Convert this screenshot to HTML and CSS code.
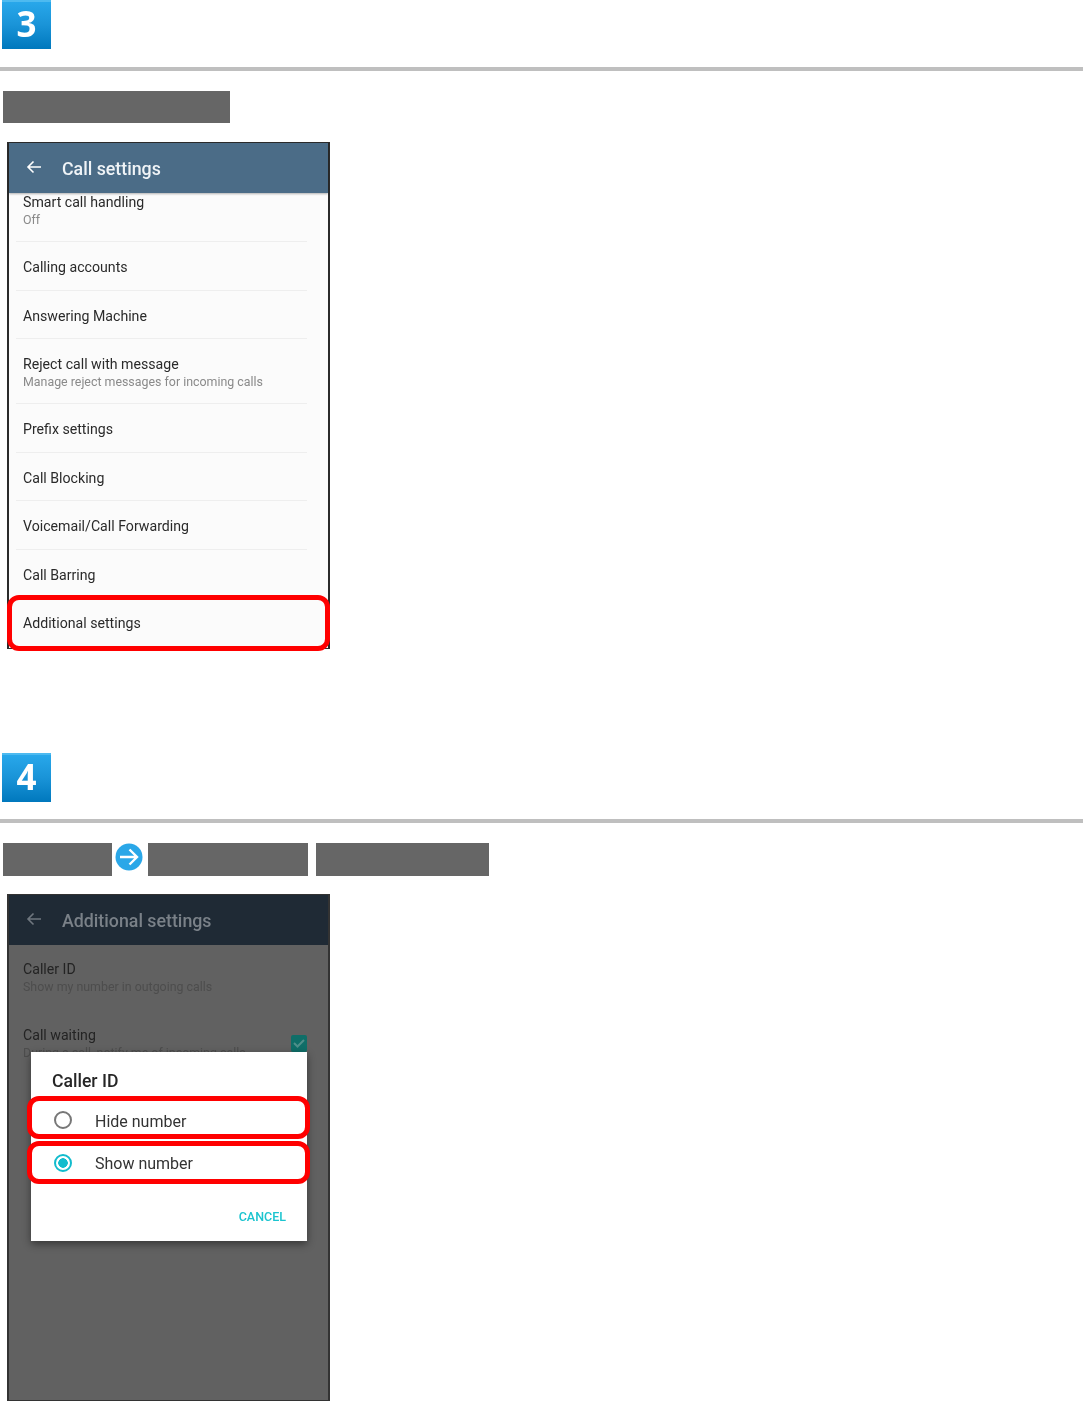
FILE: index.html
```html
<!DOCTYPE html>
<html lang="en">
<head>
<meta charset="utf-8">
<title>Call settings steps</title>
<link rel="stylesheet" href="styles.css">
</head>
<body>
<section class="step step-3">
  <div class="tile"><span class="num">3</span></div>
  <div class="rule"></div>
  <div class="bars"><span class="bar bar-a"></span></div>
  <div class="phone">
    <div class="appbar">
      <svg class="back" viewBox="0 0 16 14"><path d="M15 7H2M7.5 1.5 2 7l5.5 5.5" fill="none" stroke="currentColor" stroke-width="1.6"/></svg>
      <span class="apptitle">Call settings</span>
    </div>
    <div class="row row-first"><div class="t">Smart call handling</div><div class="s">Off</div></div>
    <div class="row"><div class="t">Calling accounts</div></div>
    <div class="row"><div class="t">Answering Machine</div></div>
    <div class="row row-tall"><div class="t">Reject call with message</div><div class="s">Manage reject messages for incoming calls</div></div>
    <div class="row"><div class="t">Prefix settings</div></div>
    <div class="row"><div class="t">Call Blocking</div></div>
    <div class="row"><div class="t">Voicemail/Call Forwarding</div></div>
    <div class="row"><div class="t">Call Barring</div></div>
    <div class="row row-last"><div class="t">Additional settings</div></div>
    <div class="ring ring-additional"></div>
  </div>
</section>
<section class="step step-4">
  <div class="tile"><span class="num">4</span></div>
  <div class="rule"></div>
  <div class="bars">
    <span class="bar bar-b"></span>
    <svg class="arrow" viewBox="0 0 28 28"><circle cx="14" cy="14" r="13.5" fill="#2aa7e8"/><path d="M5 14h17M14.5 6.5 22 14l-7.5 7.5" fill="none" stroke="#fff" stroke-width="2.4"/></svg>
    <span class="bar bar-c"></span>
    <span class="bar bar-d"></span>
  </div>
  <div class="phone phone-dim">
    <div class="appbar">
      <svg class="back" viewBox="0 0 16 14"><path d="M15 7H2M7.5 1.5 2 7l5.5 5.5" fill="none" stroke="currentColor" stroke-width="1.6"/></svg>
      <span class="apptitle">Additional settings</span>
    </div>
    <div class="row row-dim"><div class="t">Caller ID</div><div class="s">Show my number in outgoing calls</div></div>
    <div class="row row-dim"><div class="t">Call waiting</div><div class="s">During a call, notify me of incoming calls</div></div>
    <div class="check"><svg viewBox="0 0 16 16"><path d="M3 8l3.5 3.5L13 5" fill="none" stroke="#4f8f8a" stroke-width="2"/></svg></div>
    <div class="dialog">
      <div class="dtitle">Caller ID</div>
      <div class="opt"><span class="radio"></span><span class="optlabel">Hide number</span></div>
      <div class="opt"><span class="radio radio-on"></span><span class="optlabel">Show number</span></div>
      <div class="cancel">CANCEL</div>
    </div>
    <div class="ring ring-hide"></div>
    <div class="ring ring-show"></div>
  </div>
</section>
</body>
</html>
```
FILE: styles.css
```css
html, body { margin: 0; padding: 0; background: #fff; }
body { width: 1083px; height: 1405px; overflow: hidden; font-family: Roboto, "Liberation Sans", sans-serif; }

.step { display: flex; flex-direction: column; }
.step-4 { margin-top: 104px; }
.step-4 .rule { margin-top: 17px; }

.tile {
  width: 49px; height: 49px; margin-left: 2px;
  background: linear-gradient(#29a9ec 0%, #1a94d8 50%, #0078bd 100%);
  box-shadow: inset 0 2px 0 #4dbaf0;
  color: #fff; font: 700 35px/47px "Open Sans", "Liberation Sans", sans-serif; text-align: center;
}
.num { display: block; filter: blur(.5px); }
.rule { height: 4px; margin-top: 18px; background: #bfbfbf; }
.bars { display: flex; align-items: center; height: 33px; margin: 20px 0 18px 3px; }
.bar { display: block; height: 33px; background: #666; }
.bar-a { width: 227px; height: 32px; margin-bottom: 1px; }
.bar-b { width: 109px; }
.bar-c { width: 160px; margin-right: 8px; }
.bar-d { width: 173px; }
.arrow { width: 28px; height: 28px; margin: 0 5px 0 3px; position: relative; top: -3px; filter: blur(.3px); }

.phone {
  position: relative; box-sizing: border-box; width: 323px; height: 507px; margin-left: 7px;
  border: solid #2b2b2b; border-width: 1px 2px; background: #fbfbfb;
}
.appbar {
  display: flex; align-items: center; height: 50px; padding-left: 17px;
  background: #4b6c87; color: #fff; box-shadow: 0 1px 2px rgba(0,0,0,.3); position: relative;
}
.back { width: 16px; height: 14px; margin-right: 20px; margin-top: -2px; filter: blur(.3px); }
.apptitle { font-size: 17.8px; font-weight: 500; color: #f0f4f7; filter: blur(.4px); }

.row {
  box-sizing: border-box; height: 48.5px; margin: 0 21px 0 7px; padding: 17px 0 0 7px;
  border-bottom: 1px solid #eeeeee;
}
.row-first { height: 49px; padding-top: 1px; }
.row-tall { height: 65px; padding-top: 17px; }
.row-last { border-bottom: 0; }
.t { font-size: 14.15px; line-height: 17px; color: #2a2a2a; filter: blur(.35px); }
.s { font-size: 12.4px; line-height: 16px; margin-top: 1px; color: #8a8a8a; white-space: nowrap; filter: blur(.35px); }

.ring { position: absolute; box-sizing: border-box; border: 5px solid #f00; border-radius: 12px; }
.ring-additional { left: -2px; top: 452px; width: 323px; height: 56px; }

.phone-dim { background: #616161; border-color: #333; }
.phone-dim .appbar { background: #1f2a35; color: #6f777f; box-shadow: none; }
.phone-dim .apptitle { color: #7a8188; }
.phone-dim .back { color: #6f777f; }
.row-dim { height: 65.5px; border: 0; padding-top: 16px; }
.row-dim .t { color: #232323; }
.row-dim .s { color: #4d4d4d; }
.check { position: absolute; left: 282px; top: 140px; width: 16px; height: 17px; background: #0f6e68; border-radius: 2px; }
.check svg { display: block; }

.dialog {
  position: absolute; left: 22px; top: 157px; width: 276px; height: 189px; background: #fff;
  box-shadow: 0 3px 8px rgba(0,0,0,.45); display: flex; flex-direction: column;
}
.dtitle { font-size: 17.6px; font-weight: 500; color: #262626; line-height: 22px; margin: 18px 0 8px 21px; filter: blur(.3px); }
.opt { display: flex; align-items: center; height: 42.5px; padding-left: 23px; font-size: 16px; color: #333; }
.optlabel { filter: blur(.3px); }
.radio {
  box-sizing: border-box; width: 18px; height: 18px; margin: -2px 23px 0 0; border: 2px solid #777; border-radius: 50%;
}
.radio-on { border-color: #12bccd; background: radial-gradient(circle, #12bccd 0 4.5px, #fff 5px); }
.cancel { align-self: flex-end; margin: 25px 21px 0 0; font-size: 12.5px; font-weight: 500; line-height: 14px; color: #1bc4cf; filter: blur(.3px); }

.ring-hide { left: 18px; top: 201px; width: 283px; height: 43px; }
.ring-show { left: 18px; top: 246px; width: 283px; height: 43px; }
```
